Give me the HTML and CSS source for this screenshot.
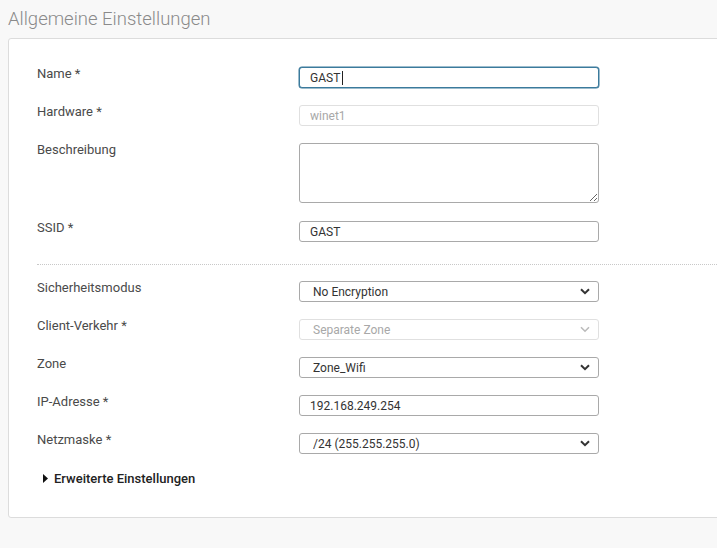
FILE: index.html
```html
<!DOCTYPE html>
<html lang="de">
<head>
<meta charset="utf-8">
<title>Allgemeine Einstellungen</title>
<link rel="stylesheet" href="styles.css">
</head>
<body>
<h1 class="title">Allgemeine Einstellungen</h1>
<div class="card">
  <div class="row">
    <label class="label">Name *</label>
    <div class="field"><input class="input focused" type="text" value="GAST"><span class="caret"></span></div>
  </div>
  <div class="row">
    <label class="label">Hardware *</label>
    <div class="field"><input class="input disabled" type="text" value="winet1" disabled></div>
  </div>
  <div class="row row-tall">
    <label class="label">Beschreibung</label>
    <div class="field"><textarea class="textarea"></textarea></div>
  </div>
  <div class="row">
    <label class="label">SSID *</label>
    <div class="field"><input class="input" type="text" value="GAST"></div>
  </div>
  <div class="divider"></div>
  <div class="row">
    <label class="label">Sicherheitsmodus</label>
    <div class="field select-wrap">
      <select class="select"><option>No Encryption</option></select>
      <svg class="chev" width="10" height="7" viewBox="0 0 10 7"><path d="M1 1.2 L5 5.2 L9 1.2" fill="none" stroke="#333" stroke-width="2"/></svg>
    </div>
  </div>
  <div class="row">
    <label class="label">Client-Verkehr *</label>
    <div class="field select-wrap">
      <select class="select disabled" disabled><option>Separate Zone</option></select>
      <svg class="chev" width="10" height="7" viewBox="0 0 10 7"><path d="M1 1.2 L5 5.2 L9 1.2" fill="none" stroke="#bbb" stroke-width="1.6"/></svg>
    </div>
  </div>
  <div class="row">
    <label class="label">Zone</label>
    <div class="field select-wrap">
      <select class="select"><option>Zone_Wifi</option></select>
      <svg class="chev" width="10" height="7" viewBox="0 0 10 7"><path d="M1 1.2 L5 5.2 L9 1.2" fill="none" stroke="#333" stroke-width="2"/></svg>
    </div>
  </div>
  <div class="row">
    <label class="label">IP-Adresse *</label>
    <div class="field"><input class="input ip" type="text" value="192.168.249.254"></div>
  </div>
  <div class="row">
    <label class="label">Netzmaske *</label>
    <div class="field select-wrap">
      <select class="select"><option>/24 (255.255.255.0)</option></select>
      <svg class="chev" width="10" height="7" viewBox="0 0 10 7"><path d="M1 1.2 L5 5.2 L9 1.2" fill="none" stroke="#333" stroke-width="2"/></svg>
    </div>
  </div>
  <div class="advanced">
    <svg class="tri" width="5" height="9" viewBox="0 0 5 9"><path d="M0 0 L5 4.5 L0 9 Z" fill="#111"/></svg>
    <span>Erweiterte Einstellungen</span>
  </div>
</div>
</body>
</html>
```
FILE: styles.css
```css
html, body {
  margin: 0;
  padding: 0;
  background: #f8f8f8;
  overflow: hidden;
  font-family: Roboto, "Liberation Sans", sans-serif;
  width: 717px;
  height: 548px;
}
.title {
  margin: 0;
  padding: 8px 0 0 8px;
  height: 30px;
  font-size: 18.5px;
  font-weight: 300;
  color: #8a8a8a;
  line-height: 22px;
}
.card {
  margin-left: 8px;
  width: 760px;
  height: 480px;
  box-sizing: border-box;
  background: #fff;
  border: 1px solid #dcdcdc;
  border-radius: 3px;
  padding: 28px 0 0 28px;
}
.row {
  display: flex;
  align-items: flex-start;
  margin-bottom: 17px;
}
.row-tall {
  margin-bottom: 18px;
}
.label {
  width: 262px;
  flex: none;
  font-size: 13px;
  line-height: 14px;
  color: #4a4a4a;
}
.field {
  width: 300px;
  position: relative;
}
.input, .select, .textarea {
  box-sizing: border-box;
  width: 300px;
  height: 21px;
  margin: 0;
  border: 1px solid #a9a9a9;
  border-radius: 3px;
  background: #fff;
  font-family: Roboto, "Liberation Sans", sans-serif;
  font-size: 12px;
  color: #333;
  padding: 0 10px;
  outline: none;
  display: block;
}
.input.focused {
  border-color: #3b7a9c;
  box-shadow: 0 0 0 0.5px #3b7a9c;
}
.caret {
  position: absolute;
  left: 43px;
  top: 4px;
  width: 1px;
  height: 14px;
  background: #222;
}
.input.disabled {
  border-color: #e0e0e0;
  color: #a8a8a8;
  background: #fff;
}
.textarea {
  height: 60px;
  resize: both;
}
.divider {
  border-top: 1px dotted #c8c8c8;
  margin: 22px 0 16px 0;
}
.select {
  appearance: none;
  -webkit-appearance: none;
  padding-left: 13px;
}
.select.disabled {
  border-color: #e0e0e0;
  color: #a8a8a8;
  opacity: 1;
}
.chev {
  position: absolute;
  right: 9px;
  top: 7px;
  pointer-events: none;
}
.advanced {
  display: flex;
  align-items: center;
  gap: 6px;
  padding-left: 6px;
  margin-top: 2px;
  font-size: 13px;
  font-weight: 500;
  color: #222;
}
```
